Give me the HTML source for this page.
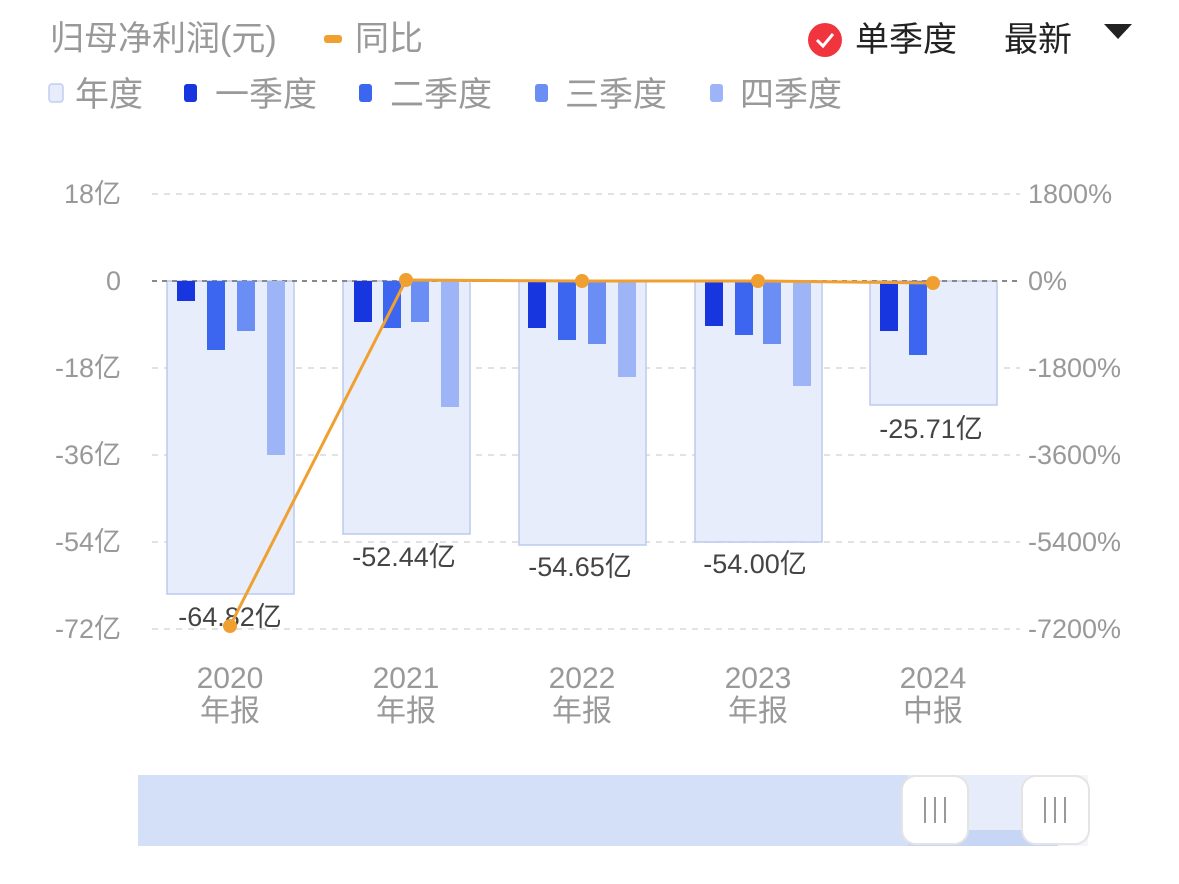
<!DOCTYPE html>
<html><head><meta charset="utf-8"><style>
body{margin:0;background:#fff;width:1179px;height:884px;overflow:hidden;font-family:"Liberation Sans","Noto Sans CJK SC",sans-serif}
</style></head><body>
<svg width="1179" height="884" xmlns="http://www.w3.org/2000/svg" style="position:absolute;left:0;top:0;font-family:'Liberation Sans','Noto Sans CJK SC',sans-serif">
<g font-size="34" fill="#999">
<text x="50" y="50">归母净利润(元)</text>
<rect x="324" y="35" width="18" height="8" rx="3" fill="#f0a030"/>
<text x="355" y="50">同比</text>
</g>
<circle cx="825" cy="40" r="17" fill="#f0353f"/>
<path d="M817 40 l6 6 l10 -12" stroke="#fff" stroke-width="3" fill="none"/>
<text x="855" y="51" font-size="34" fill="#222">单季度</text>
<text x="1004" y="51" font-size="34" fill="#222">最新</text>
<path d="M1104 24 h28 l-14 15z" fill="#222"/>
<g font-size="34" fill="#999">
<rect x="49" y="84" width="14" height="18" rx="3" fill="#e8edfb" stroke="#c0cdf0" stroke-width="1.5"/>
<text x="75" y="106">年度</text>
<rect x="184" y="84" width="13" height="18" rx="3" fill="#1836e0"/>
<text x="215" y="106">一季度</text>
<rect x="359" y="84" width="13" height="18" rx="3" fill="#3d66f0"/>
<text x="390" y="106">二季度</text>
<rect x="535" y="84" width="13" height="18" rx="3" fill="#6b8ef5"/>
<text x="565" y="106">三季度</text>
<rect x="710" y="84" width="13" height="18" rx="3" fill="#9db4f7"/>
<text x="740" y="106">四季度</text>
</g>
<g stroke="#e2e2e2" stroke-width="2" stroke-dasharray="6 6">
<line x1="152" y1="194" x2="1020" y2="194"/>
<line x1="152" y1="368" x2="1020" y2="368"/>
<line x1="152" y1="455" x2="1020" y2="455"/>
<line x1="152" y1="542" x2="1020" y2="542"/>
<line x1="152" y1="629" x2="1020" y2="629"/>
</g>
<g fill="#e8edfb" stroke="#bccaf0" stroke-width="1.5">
<rect x="167" y="281" width="127" height="313"/>
<rect x="343" y="281" width="127" height="253"/>
<rect x="519" y="281" width="127" height="264"/>
<rect x="695" y="281" width="127" height="261"/>
<rect x="870" y="281" width="127" height="124"/>
</g>
<line x1="152" y1="281" x2="1020" y2="281" stroke="#888" stroke-width="2" stroke-dasharray="5 5"/>
<g>
<rect x="177" y="281" width="18" height="20" fill="#1836e0"/><rect x="207" y="281" width="18" height="69" fill="#3d66f0"/><rect x="237" y="281" width="18" height="50" fill="#6b8ef5"/><rect x="267" y="281" width="18" height="174" fill="#9db4f7"/>
<rect x="354" y="281" width="18" height="41" fill="#1836e0"/><rect x="383" y="281" width="18" height="47" fill="#3d66f0"/><rect x="411" y="281" width="18" height="41" fill="#6b8ef5"/><rect x="441" y="281" width="18" height="126" fill="#9db4f7"/>
<rect x="528" y="281" width="18" height="47" fill="#1836e0"/><rect x="558" y="281" width="18" height="59" fill="#3d66f0"/><rect x="588" y="281" width="18" height="63" fill="#6b8ef5"/><rect x="618" y="281" width="18" height="96" fill="#9db4f7"/>
<rect x="705" y="281" width="18" height="45" fill="#1836e0"/><rect x="735" y="281" width="18" height="54" fill="#3d66f0"/><rect x="763" y="281" width="18" height="63" fill="#6b8ef5"/><rect x="793" y="281" width="18" height="105" fill="#9db4f7"/>
<rect x="880" y="281" width="18" height="50" fill="#1836e0"/><rect x="909" y="281" width="18" height="74" fill="#3d66f0"/>
</g>
<g font-size="27" fill="#444" text-anchor="middle">
<text x="230" y="626">-64.82亿</text>
<text x="404" y="566">-52.44亿</text>
<text x="580" y="576">-54.65亿</text>
<text x="755" y="573">-54.00亿</text>
<text x="931" y="438">-25.71亿</text>
</g>
<polyline points="230,626 406,280 582,281 758,281 933,283" fill="none" stroke="#f0a030" stroke-width="3"/>
<g fill="#f0a030"><circle cx="230" cy="626" r="7"/><circle cx="406" cy="280" r="7"/><circle cx="582" cy="281" r="7"/><circle cx="758" cy="281" r="7"/><circle cx="933" cy="283" r="7"/></g>
<g font-size="27" fill="#999" text-anchor="end">
<text x="121" y="203">18亿</text><text x="121" y="290">0</text><text x="121" y="377">-18亿</text><text x="121" y="464">-36亿</text><text x="121" y="551">-54亿</text><text x="121" y="638">-72亿</text>
</g>
<g font-size="27" fill="#999">
<text x="1028" y="203">1800%</text><text x="1028" y="290">0%</text><text x="1028" y="377">-1800%</text><text x="1028" y="464">-3600%</text><text x="1028" y="551">-5400%</text><text x="1028" y="638">-7200%</text>
</g>
<g font-size="30" fill="#999" text-anchor="middle">
<text x="230" y="688">2020</text><text x="230" y="721">年报</text>
<text x="406" y="688">2021</text><text x="406" y="721">年报</text>
<text x="582" y="688">2022</text><text x="582" y="721">年报</text>
<text x="758" y="688">2023</text><text x="758" y="721">年报</text>
<text x="933" y="688">2024</text><text x="933" y="721">中报</text>
</g>
<rect x="138" y="775" width="950" height="71" fill="#f4f6fc"/>
<rect x="138" y="775" width="770" height="71" fill="#d4dff8"/>
<rect x="908" y="775" width="150" height="60" fill="#e6ecfa"/>
<rect x="908" y="830" width="150" height="16" fill="#c8d6f6"/>
<rect x="902" y="776" width="66" height="68" rx="14" fill="#fff" stroke="#e4e4e4" stroke-width="2"/>
<rect x="1022" y="776" width="67" height="68" rx="14" fill="#fff" stroke="#e4e4e4" stroke-width="2"/>
<g stroke="#999" stroke-width="2">
<line x1="925" y1="797" x2="925" y2="823"/><line x1="935" y1="797" x2="935" y2="823"/><line x1="945" y1="797" x2="945" y2="823"/>
<line x1="1045" y1="797" x2="1045" y2="823"/><line x1="1055" y1="797" x2="1055" y2="823"/><line x1="1065" y1="797" x2="1065" y2="823"/>
</g>
</svg>
</body></html>
